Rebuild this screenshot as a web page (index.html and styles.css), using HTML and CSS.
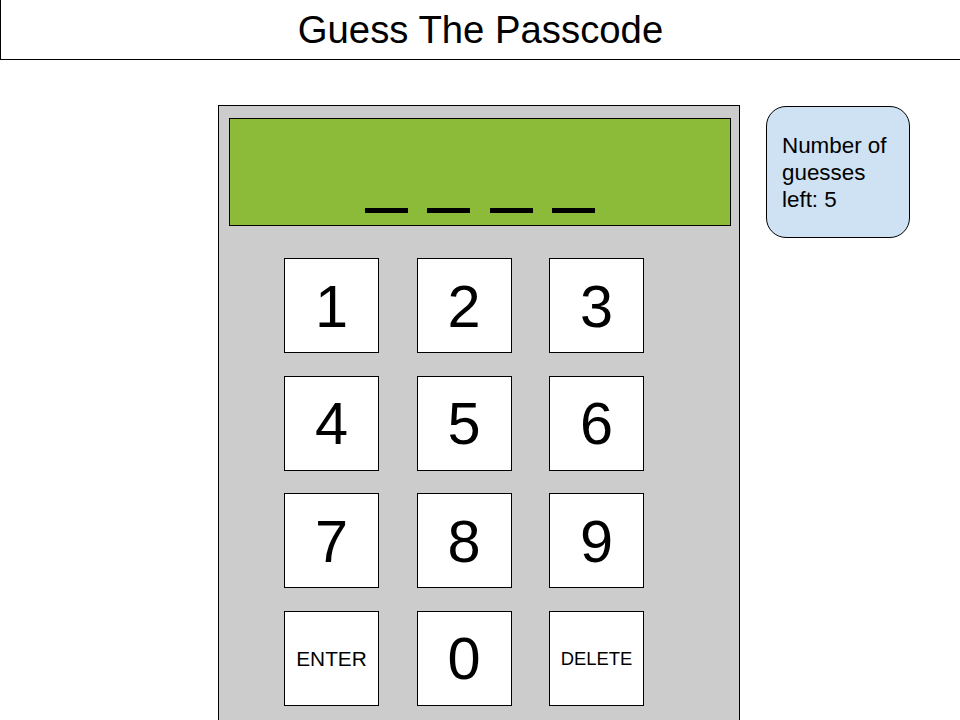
FILE: index.html
```html
<!DOCTYPE html>
<html>
<head>
<meta charset="utf-8">
<title>Guess The Passcode</title>
<link rel="stylesheet" href="styles.css">
</head>
<body>
<header class="top">
  <h1 class="title">Guess The Passcode</h1>
</header>
<main class="stage">
  <section class="panel">
    <div class="screen">
      <span class="dash"></span><span class="dash"></span><span class="dash"></span><span class="dash"></span>
    </div>
    <div class="keys">
      <button class="key">1</button>
      <button class="key">2</button>
      <button class="key">3</button>
      <button class="key">4</button>
      <button class="key">5</button>
      <button class="key">6</button>
      <button class="key">7</button>
      <button class="key">8</button>
      <button class="key">9</button>
      <button class="key key-word">ENTER</button>
      <button class="key">0</button>
      <button class="key key-word key-small">DELETE</button>
    </div>
  </section>
  <aside class="info">Number of guesses left: 5</aside>
</main>
</body>
</html>
```
FILE: styles.css
```css
html, body {
  margin: 0;
  padding: 0;
  background: #ffffff;
  font-family: "Liberation Sans", Arial, sans-serif;
  color: #000;
  overflow: hidden;
  height: 720px;
}

.top {
  height: 59px;
  border-left: 1px solid #000;
  border-bottom: 1px solid #000;
  display: flex;
  align-items: center;
  justify-content: center;
}

.title {
  margin: 0;
  font-weight: normal;
  font-size: 38.3px;
  line-height: 1;
  padding-top: 2px;
}

.stage {
  display: flex;
  align-items: flex-start;
  padding-top: 45px;
  padding-left: 218px;
  gap: 26px;
}

.panel {
  width: 502px;
  height: 700px;
  border: 1px solid #000;
  background: #cccccc;
  padding: 12px 8px 0 10px;
}

.screen {
  height: 108px;
  box-sizing: border-box;
  border: 1px solid #000;
  background: #8cbb3a;
  display: flex;
  justify-content: center;
  align-items: flex-end;
  gap: 19.5px;
  padding-bottom: 12px;
}

.dash {
  width: 43px;
  height: 5px;
  background: #000;
}

.keys {
  display: grid;
  grid-template-columns: repeat(3, 95px);
  grid-auto-rows: 95px;
  column-gap: 37.5px;
  row-gap: 22.5px;
  margin-top: 32px;
  margin-left: 55px;
}

.key {
  margin: 0;
  padding: 2px 0 0;
  border: 1px solid #000;
  background: #fff;
  font-family: "Liberation Sans", Arial, sans-serif;
  font-size: 59.5px;
  color: #000;
  display: flex;
  align-items: center;
  justify-content: center;
  line-height: 1;
}

.key-word {
  font-size: 20.8px;
  padding-top: 2px;
}

.key-small {
  font-size: 18.4px;
}

.info {
  margin-top: 1px;
  width: 144px;
  height: 132px;
  box-sizing: border-box;
  border: 1px solid #000;
  border-radius: 20px;
  background: #cfe2f3;
  font-size: 22.4px;
  line-height: 27px;
  padding: 25px 10px 0 15px;
}
```
